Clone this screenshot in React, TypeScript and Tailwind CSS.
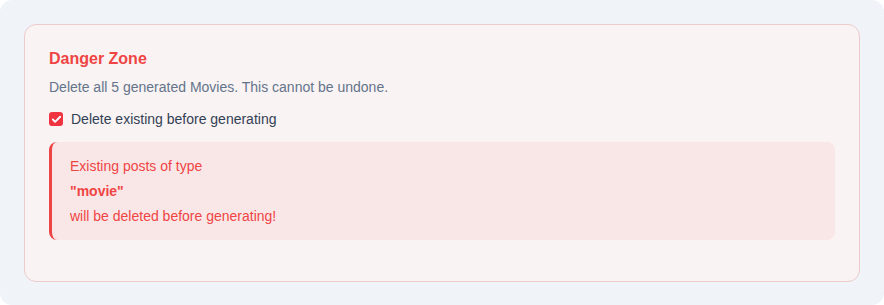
import { Check } from 'lucide-react';

export default function App() {
  return (
    <div className="h-[305px] w-[884px] bg-white font-['Liberation_Sans',Arial,sans-serif]">
      <div className="h-full w-full rounded-xl bg-[#f0f4f9] p-6">
        <div className="rounded-xl border border-[#ebcbcb] bg-[#f9f3f3] px-6 pt-6 pb-[41px]">
          <h3 className="text-[16px] leading-5 font-bold text-[#ef4444]">Danger Zone</h3>
          <p className="mt-2 text-[14px] leading-5 text-[#64748b]">
            Delete all 5 generated Movies. This cannot be undone.
          </p>
          <label className="mt-3 flex items-center gap-2 text-[14px] leading-5 text-[#334155]">
            <span className="flex h-[14px] w-[14px] items-center justify-center rounded-[3px] bg-[#ef3340]">
              <Check className="h-[11px] w-[11px] text-white" strokeWidth={4} />
            </span>
            Delete existing before generating
          </label>
          <div className="mt-[13px] rounded-lg border-l-[3px] border-[#ef4444] bg-[#f9e7e7] pt-3 pb-[11px] pr-4 pl-[18px] text-[14px] text-[#ef4444]">
            <div className="leading-[25px]">Existing posts of type</div>
            <div className="leading-6 font-bold">"movie"</div>
            <div className="leading-[26px]">will be deleted before generating!</div>
          </div>
        </div>
      </div>
    </div>
  );
}
